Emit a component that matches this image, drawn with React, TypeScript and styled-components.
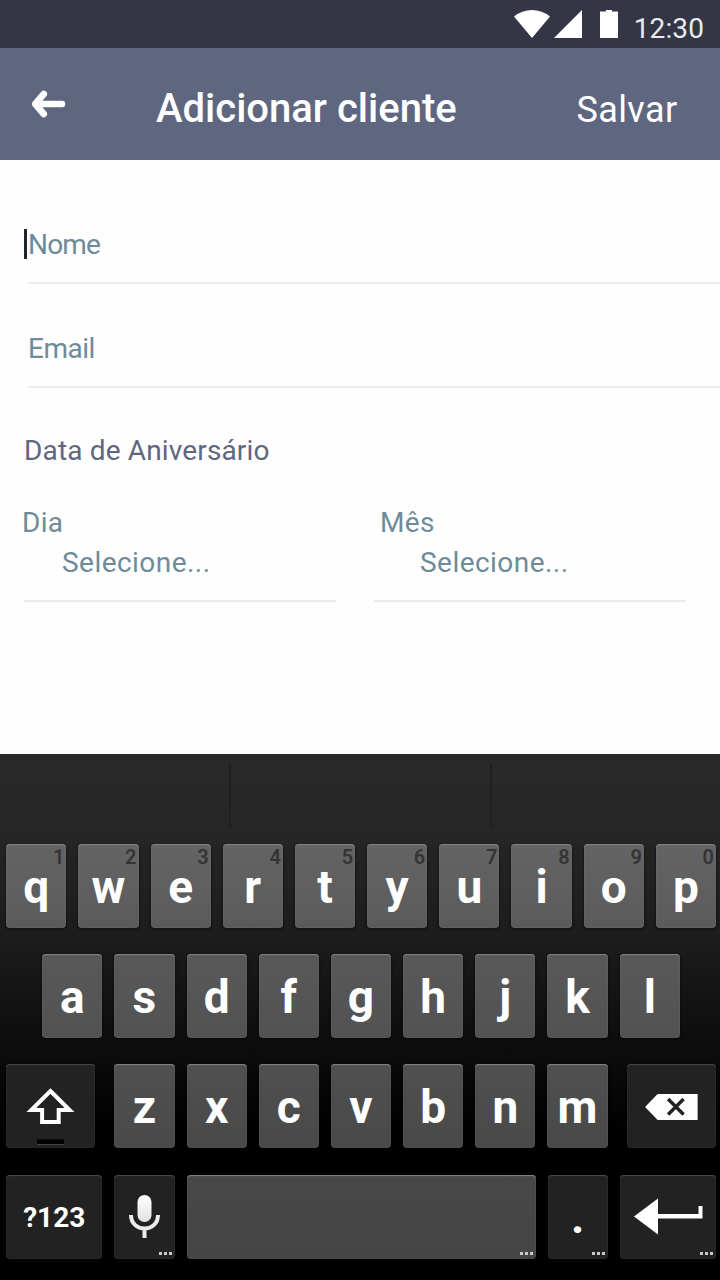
import React from "react";
import styled, { createGlobalStyle } from "styled-components";

const Global = createGlobalStyle`
  * { box-sizing: border-box; }
  body { margin: 0; background: #fff; font-family: Roboto, sans-serif; }
`;

const Screen = styled.main`
  width: 720px;
  height: 1280px;
  display: flex;
  flex-direction: column;
  overflow: hidden;
  background: #fefefe;
`;

const StatusBar = styled.div`
  height: 48px;
  flex: none;
  display: flex;
  justify-content: flex-end;
  padding-right: 16px;
  background: #343646;
`;

const StatusIcons = styled.svg`
  width: 108px;
  height: 48px;
  margin-right: 14px;
  fill: #fff;
`;

const Clock = styled.time`
  padding-top: 9px;
  font-size: 28px;
  line-height: 40px;
  letter-spacing: 0.1px;
  color: #e9eaf2;
`;

const Header = styled.header`
  height: 112px;
  flex: none;
  display: grid;
  grid-template-columns: 156px 1fr auto;
  padding-right: 42.5px;
  background: #5f6780;
  color: #fff;
`;

const BackButton = styled.button`
  display: flex;
  padding: 0;
  border: 0;
  background: none;
`;

const Title = styled.h1`
  margin: 0;
  padding-top: 9px;
  font-size: 40px;
  font-weight: 500;
  line-height: 103px;
  white-space: nowrap;
`;

const SaveButton = styled.button`
  display: flex;
  align-items: flex-start;
  padding: 12px 0 0;
  border: 0;
  background: none;
  color: #fff;
  font: 400 36px/100px Roboto, sans-serif;
  letter-spacing: 0.4px;
`;

const Form = styled.form`
  height: 594px;
  flex: none;
  display: flex;
  flex-direction: column;
  padding-top: 64px;
  font-size: 28px;
  color: #6f8b98;
`;

const Field = styled.div`
  height: 60px;
  display: flex;
  align-items: flex-start;
  margin: 0 0 44px 24px;
  line-height: 42px;
`;

const Caret = styled.i<{ $on?: boolean }>`
  width: 3px;
  height: 30px;
  margin: 5px 1px 0 0;
  background: ${(p) => (p.$on ? "#20242c" : "transparent")};
`;

const FieldBody = styled.div<{ $spacing: number }>`
  flex: 1;
  height: 60px;
  border-bottom: 2px solid #ebebed;
  letter-spacing: ${(p) => p.$spacing}px;
`;

const SectionTitle = styled.h2`
  margin: -1px 0 0 24px;
  font-size: 28px;
  font-weight: 400;
  line-height: 40px;
  letter-spacing: 0.15px;
  color: #5f6780;
`;

const Selects = styled.div`
  display: grid;
  grid-template-columns: 312px 312px;
  column-gap: 38px;
  margin: 32px 0 0 24px;
`;

const Select = styled.div<{ $shift: number }>`
  height: 99px;
  border-bottom: 2px solid #ebebed;
  line-height: 40px;
  letter-spacing: 0.3px;
  text-indent: ${(p) => p.$shift}px;
`;

const SelectValue = styled.div`
  padding-left: 40px;
  letter-spacing: 0.46px;
`;

const Keyboard = styled.section`
  flex: 1;
  display: flex;
  flex-direction: column;
  background: linear-gradient(#292929 0, #262626 80px, #1c1c1c 184px, #0d0d0d 290px, #000 380px);
`;

const Suggestions = styled.div`
  height: 90px;
  flex: none;
  display: grid;
  grid-template-columns: 231px 261px 1fr;
  padding: 10px 0 16px;
`;

const Suggestion = styled.div`
  border-right: 2px solid #202020;
  &:last-child { border: 0; }
`;

const KeyRow = styled.div<{ $cols: string; $inset?: number }>`
  height: 84px;
  flex: none;
  display: grid;
  grid-template-columns: ${(p) => p.$cols};
  column-gap: 12px;
  margin-bottom: 26.2px;
  padding-left: ${(p) => p.$inset ?? 6.15}px;
`;

const Key = styled.button<{ $tone: string; $dark?: boolean; $size?: number; $left?: number; $right?: number }>`
  position: relative;
  display: flex;
  align-items: center;
  justify-content: center;
  height: 84px;
  margin: 0 ${(p) => p.$right ?? 0}px 0 ${(p) => p.$left ?? 0}px;
  padding: ${(p) => (p.$size ? 3 : 1)}px 0 0;
  border: 0;
  border-radius: 4px;
  background: ${(p) => p.$tone};
  box-shadow: inset 0 2px 1px -1px ${(p) => (p.$dark ? "#4a4a4a" : "#858585")},
    inset 0 0 1px 1px rgba(255, 255, 255, 0.04), 0 1px 2px 1px rgba(0, 0, 0, 0.35);
  color: #fff;
  font: 700 ${(p) => p.$size ?? 46}px/1 Roboto, sans-serif;
`;

const Hint = styled.span`
  position: absolute;
  top: 2px;
  right: 2px;
  font-size: 20px;
  font-weight: 600;
  line-height: 22px;
  color: #343434;
`;

const More = styled.span`
  position: absolute;
  right: 3px;
  bottom: 4px;
  display: flex;
  gap: 2px;
  i { width: 3px; height: 3px; background: #c9c9c9; }
`;

const KeyArt = styled.svg`
  position: absolute;
  inset: 0;
  width: 100%;
  height: 84px;
`;

const Dots = () => <More><i /><i /><i /></More>;

const TOP = [["q", 1], ["w", 2], ["e", 3], ["r", 4], ["t", 5], ["y", 6], ["u", 7], ["i", 8], ["o", 9], ["p", 0]] as const;
const TONES = [
  "linear-gradient(#646464, #5b5b5b)",
  "linear-gradient(#595959, #525252)",
  "linear-gradient(#505050, #494949)",
  "linear-gradient(#484848, #454545)",
];
const DARK = "#222";

export default function App() {
  return (
    <>
      <Global />
      <Screen>
        <StatusBar>
          <StatusIcons viewBox="512 0 108 48">
            <path d="M532 38 L514 16.5 Q522 10 532 10 T550 16.5Z" />
            <path d="M554 38 H582 V10Z" />
            <path d="M600 11.5 H606 V10 H612 V11.5 H618 V38 H600Z" />
          </StatusIcons>
          <Clock>12:30</Clock>
        </StatusBar>
        <Header>
          <BackButton aria-label="Voltar">
            <svg width="96" height="112" fill="none" stroke="#fff" strokeWidth="6.6" strokeLinecap="round" strokeLinejoin="round">
              <path d="M62 56 H36 M43.8 46 L35.2 56 L43.8 66" />
            </svg>
          </BackButton>
          <Title>Adicionar cliente</Title>
          <SaveButton>Salvar</SaveButton>
        </Header>
        <Form>
          <Field><Caret $on /><FieldBody $spacing={-0.8}>Nome</FieldBody></Field>
          <Field><Caret /><FieldBody $spacing={-0.5}>Email</FieldBody></Field>
          <SectionTitle>Data de Aniversário</SectionTitle>
          <Selects>
            <Select $shift={-2}>Dia<SelectValue>Selecione...</SelectValue></Select>
            <Select $shift={6}>Mês<SelectValue>Selecione...</SelectValue></Select>
          </Selects>
        </Form>
        <Keyboard>
          <Suggestions><Suggestion /><Suggestion /><Suggestion /></Suggestions>
          <KeyRow $cols="repeat(10, 60.2px)">
            {TOP.map(([c, n]) => <Key key={c} $tone={TONES[0]}>{c}<Hint>{n}</Hint></Key>)}
          </KeyRow>
          <KeyRow $cols="repeat(9, 60.2px)" $inset={42.15}>
            {"asdfghjkl".split("").map((c) => <Key key={c} $tone={TONES[1]}>{c}</Key>)}
          </KeyRow>
          <KeyRow $cols="96.2px repeat(7, 60.2px) 96.2px">
            <Key $tone={DARK} $dark $right={7} aria-label="Shift">
              <KeyArt viewBox="6 1064 89 84">
                <path d="M50.3 1091 L69.5 1110 H58.6 V1122 H42 V1110 H31.2Z" fill="none" stroke="#fff" strokeWidth="4" />
                <path d="M37 1139.5 H64 V1144 H37Z" fill="#000" />
                <path d="M37 1144.5 H64" stroke="#444" strokeWidth="1" />
              </KeyArt>
            </Key>
            {"zxcvbnm".split("").map((c) => <Key key={c} $tone={TONES[2]}>{c}</Key>)}
            <Key $tone={DARK} $dark $left={7} aria-label="Apagar">
              <KeyArt viewBox="627 1064 89 84">
                <path d="M645 1107 L657.5 1094 H697.5 V1120 H657.5Z" fill="#fff" />
                <path d="M668 1099 L683.5 1114.5 M683.5 1099 L668 1114.5" stroke="#222" strokeWidth="3.4" />
              </KeyArt>
            </Key>
          </KeyRow>
          <KeyRow $cols="96.2px 60.2px 349px 60.2px 96.2px">
            <Key $tone={DARK} $dark $size={28}>?123</Key>
            <Key $tone={DARK} $dark aria-label="Voz">
              <KeyArt viewBox="114 1175 60.2 84">
                <defs>
                  <linearGradient id="mic" x1="0" y1="0" x2="0" y2="1">
                    <stop offset="0" stopColor="#fff" />
                    <stop offset="1" stopColor="#e2e2e2" />
                  </linearGradient>
                </defs>
                <rect x="137.5" y="1195" width="14" height="27" rx="7" fill="url(#mic)" />
                <path d="M131 1215 C131 1233 158 1233 158 1215 M144.5 1228 V1238" fill="none" stroke="#ececec" strokeWidth="4" />
              </KeyArt>
              <Dots />
            </Key>
            <Key $tone={TONES[3]} aria-label="Espaço"><Dots /></Key>
            <Key $tone={DARK} $dark>.<Dots /></Key>
            <Key $tone={DARK} $dark aria-label="Enter">
              <KeyArt viewBox="619.5 1175 96.2 84">
                <path d="M633.5 1216.5 L657.5 1198.5 V1214 H698 V1206 H702 V1218.5 H657.5 V1234.5Z" fill="#fff" />
              </KeyArt>
              <Dots />
            </Key>
          </KeyRow>
        </Keyboard>
      </Screen>
    </>
  );
}
